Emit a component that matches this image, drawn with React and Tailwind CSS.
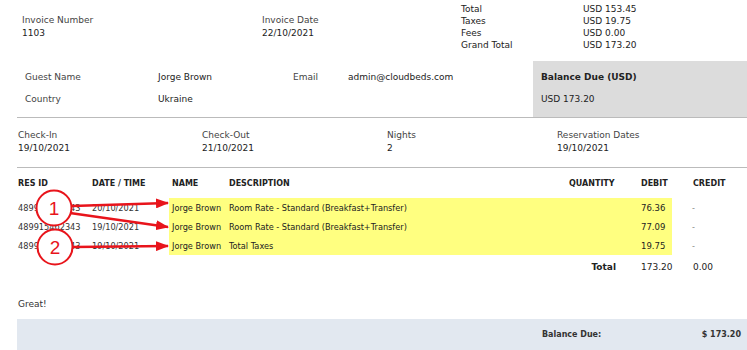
import React from 'react';

const rows = [
  { id: '489915462343', date: '20/10/2021', name: 'Jorge Brown', desc: 'Room Rate - Standard (Breakfast+Transfer)', debit: '76.36' },
  { id: '489915462343', date: '19/10/2021', name: 'Jorge Brown', desc: 'Room Rate - Standard (Breakfast+Transfer)', debit: '77.09' },
  { id: '489915462343', date: '19/10/2021', name: 'Jorge Brown', desc: 'Total Taxes', debit: '19.75' },
];

const Callouts = () => (
  <svg className="absolute left-0 top-0 pointer-events-none" width="747" height="350" viewBox="0 0 747 350">
    <defs>
      <marker id="head" markerWidth="13" markerHeight="10" refX="12" refY="5" orient="auto" markerUnits="userSpaceOnUse">
        <path d="M0,0 L13,5 L0,10 z" fill="#e8141b" />
      </marker>
    </defs>
    <g stroke="#e8141b" strokeWidth="2.5" fill="none">
      <line x1="72" y1="206" x2="168" y2="203" markerEnd="url(#head)" />
      <line x1="70" y1="213" x2="168" y2="227" markerEnd="url(#head)" />
      <line x1="73" y1="247" x2="168" y2="246" markerEnd="url(#head)" />
      <circle cx="54" cy="208" r="17.5" fill="#fff" strokeWidth="2" />
      <circle cx="55" cy="247" r="17.5" fill="#fff" strokeWidth="2" />
    </g>
    <text x="54" y="215" textAnchor="middle" fontSize="19" fill="#e8141b" fontFamily="'Liberation Sans', sans-serif">1</text>
    <text x="55" y="254" textAnchor="middle" fontSize="19" fill="#e8141b" fontFamily="'Liberation Sans', sans-serif">2</text>
  </svg>
);

export default function App() {
  return (
    <div className="relative w-[747px] h-[350px] overflow-hidden bg-white text-[#222] text-[9px] leading-[12px]" style={{ fontFamily: "'DejaVu Sans', sans-serif" }}>
      {/* invoice header */}
      <div className="flex h-[61px] pt-[3px] pl-[22px]">
        <div className="w-[240px] pt-[11px]">
          <div className="text-[#444]">Invoice Number</div>
          <div className="mt-[1px]">1103</div>
        </div>
        <div className="w-[199px] pt-[11px]">
          <div className="text-[#444]">Invoice Date</div>
          <div className="mt-[1px]">22/10/2021</div>
        </div>
        <div className="w-[122px]">
          <div>Total</div>
          <div>Taxes</div>
          <div>Fees</div>
          <div>Grand Total</div>
        </div>
        <div>
          <div>USD 153.45</div>
          <div>USD 19.75</div>
          <div>USD 0.00</div>
          <div>USD 173.20</div>
        </div>
      </div>

      {/* guest */}
      <div className="ml-[17px] flex border-b border-[#bbb] h-[57px]">
        <div className="flex-1 pl-[8px] pt-[10px] flex flex-col gap-[10px]">
          <div className="flex">
            <span className="w-[133px] text-[#444]">Guest Name</span>
            <span className="w-[135px]">Jorge Brown</span>
            <span className="w-[55px] text-[#444]">Email</span>
            <span>admin@cloudbeds.com</span>
          </div>
          <div className="flex">
            <span className="w-[133px] text-[#444]">Country</span>
            <span>Ukraine</span>
          </div>
        </div>
        <div className="w-[214px] bg-[#dcdcdc] pl-[8px] pt-[10px] flex flex-col gap-[10px]">
          <div className="font-bold">Balance Due (USD)</div>
          <div>USD 173.20</div>
        </div>
      </div>

      {/* stay */}
      <div className="ml-[17px] flex h-[50px] pl-[1px] pt-[11px] border-b border-[#bbb]">
        <div className="w-[184px]">
          <div className="text-[#444]">Check-In</div>
          <div className="mt-[1px]">19/10/2021</div>
        </div>
        <div className="w-[185px]">
          <div className="text-[#444]">Check-Out</div>
          <div className="mt-[1px]">21/10/2021</div>
        </div>
        <div className="w-[170px]">
          <div className="text-[#444]">Nights</div>
          <div className="mt-[1px]">2</div>
        </div>
        <div>
          <div className="text-[#444]">Reservation Dates</div>
          <div className="mt-[1px]">19/10/2021</div>
        </div>
      </div>

      {/* folio table */}
      <div className="ml-[18px]">
        <div className="flex font-bold text-[8px] h-[30px] pt-[10px] items-start">
          <span className="w-[74px]">RES ID</span>
          <span className="w-[80px]">DATE / TIME</span>
          <span className="w-[57px]">NAME</span>
          <span className="w-[340px]">DESCRIPTION</span>
          <span className="w-[72px]">QUANTITY</span>
          <span className="w-[52px]">DEBIT</span>
          <span>CREDIT</span>
        </div>
        {rows.map((r, i) => (
          <div key={i} className="flex h-[19px] items-center text-[8.2px]">
            <span className="w-[74px] text-[#333]">{r.id}</span>
            <span className="w-[77px] text-[#333]">{r.date}</span>
            <div className="flex w-[503px] h-full items-center bg-[#ffff80]">
              <span className="w-[60px] pl-[3px] whitespace-nowrap">{r.name}</span>
              <span className="w-[412px]">{r.desc}</span>
              <span className="text-[8.5px]">{r.debit}</span>
            </div>
            <span className="pl-[20px] text-[#888]">-</span>
          </div>
        ))}
        <div className="flex h-[24px] items-center">
          <span className="w-[623px] text-right pr-[25px] font-bold">Total</span>
          <span className="w-[52px]">173.20</span>
          <span>0.00</span>
        </div>
      </div>

      <div className="ml-[18px] mt-[19px] text-[#333]">Great!</div>

      <div className="ml-[17px] mt-[9px] h-[40px] bg-[#e2e8f0] flex items-start pt-[10px] text-[8px] font-bold text-[#333]">
        <span className="ml-[525px]">Balance Due:</span>
        <span className="ml-auto mr-[6px]">$ 173.20</span>
      </div>

      <Callouts />
    </div>
  );
}
